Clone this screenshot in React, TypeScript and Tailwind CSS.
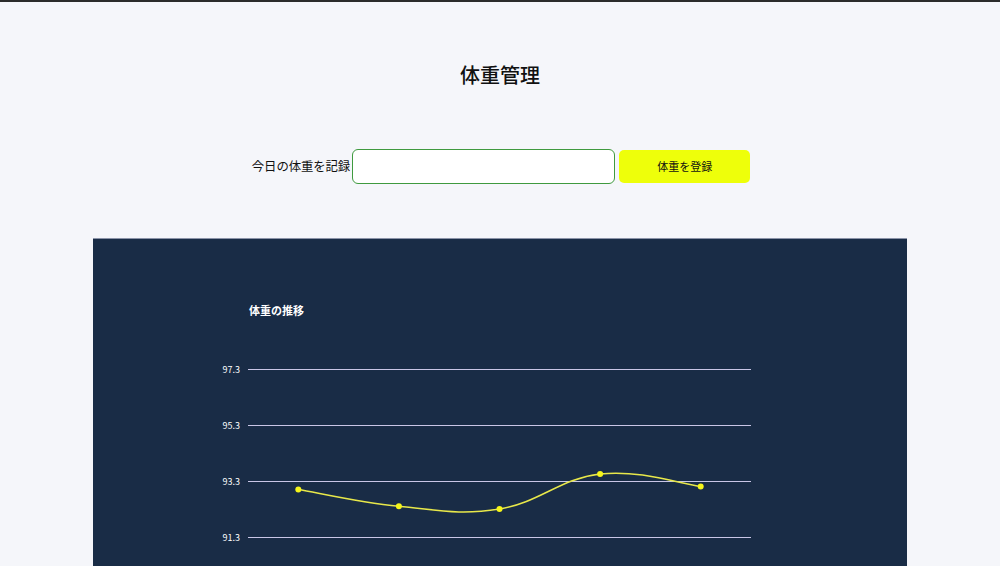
import React from 'react';

const weights = [93.0, 92.4, 92.3, 93.55, 93.1];
const ticks = [97.3, 95.3, 93.3, 91.3];

// chart geometry (px inside the svg)
const W = 503;
const topY = 0;
const perKg = 28;
const yOf = (v: number) => topY + (97.3 - v) * perKg;
const xOf = (i: number) => (W / weights.length) * (i + 0.5);

const curvePath = () => {
  const pts = weights.map((w, i) => [xOf(i), yOf(w)]);
  const t = 0.4;
  let d = `M${pts[0][0]},${pts[0][1]}`;
  for (let i = 0; i < pts.length - 1; i++) {
    const p0 = pts[i - 1] || pts[i];
    const p1 = pts[i];
    const p2 = pts[i + 1];
    const p3 = pts[i + 2] || p2;
    const c1x = p1[0] + ((p2[0] - p0[0]) * t) / 2;
    const c1y = p1[1] + ((p2[1] - p0[1]) * t) / 2;
    const c2x = p2[0] - ((p3[0] - p1[0]) * t) / 2;
    const c2y = p2[1] - ((p3[1] - p1[1]) * t) / 2;
    d += ` C${c1x},${c1y} ${c2x},${c2y} ${p2[0]},${p2[1]}`;
  }
  return d;
};

const WeightChart = () => (
  <div className="pl-[125px] pt-[66px]">
    <h2 className="pl-[31px] text-[11px] font-bold text-white leading-none">体重の推移</h2>
    <div className="mt-[53px] flex">
      <div className="w-[30px] relative h-[180px]">
        {ticks.map((t) => (
          <span
            key={t}
            className="absolute right-[8px] text-[9px] text-white leading-none"
            style={{ top: yOf(t) - 4 }}
          >
            {t}
          </span>
        ))}
      </div>
      <svg width={W} height={180} className="overflow-visible">
        {ticks.map((t) => (
          <line key={t} x1={0} x2={W} y1={yOf(t) + 0.5} y2={yOf(t) + 0.5} stroke="#c9c6e6" strokeWidth={1} />
        ))}
        <path d={curvePath()} fill="none" stroke="#e8e84a" strokeWidth={1.5} />
        {weights.map((w, i) => (
          <circle key={i} cx={xOf(i)} cy={yOf(w)} r={3} fill="#f5f51a" />
        ))}
      </svg>
    </div>
  </div>
);

export default function App() {
  return (
    <div
      className="w-[1000px] h-[566px] overflow-hidden bg-[#f5f6fa] border-t-2 border-[#2b2b2b]"
      style={{ fontFamily: '"Noto Sans CJK JP", "Noto Sans", sans-serif' }}
    >
      <h1 className="pt-[59px] text-center text-[20px] font-medium text-[#111] leading-[28px]">体重管理</h1>

      <div className="mt-[60px] flex items-center justify-center pl-[2px]">
        <label className="text-[12.4px] text-[#111] tracking-[-0.1px]">今日の体重を記録</label>
        <input
          type="text"
          className="ml-[2px] w-[263px] h-[35px] rounded-[6px] border border-[#3f9a3f] bg-white outline-none"
        />
        <button className="ml-[4px] w-[131px] h-[33px] rounded-[5px] bg-[#eeff0a] text-[11px] text-[#111]">
          体重を登録
        </button>
      </div>

      <div className="mt-[54px] mx-[93px] h-[400px] bg-[#192c46] border-t border-[#8b93a8]">
        <WeightChart />
      </div>
    </div>
  );
}
